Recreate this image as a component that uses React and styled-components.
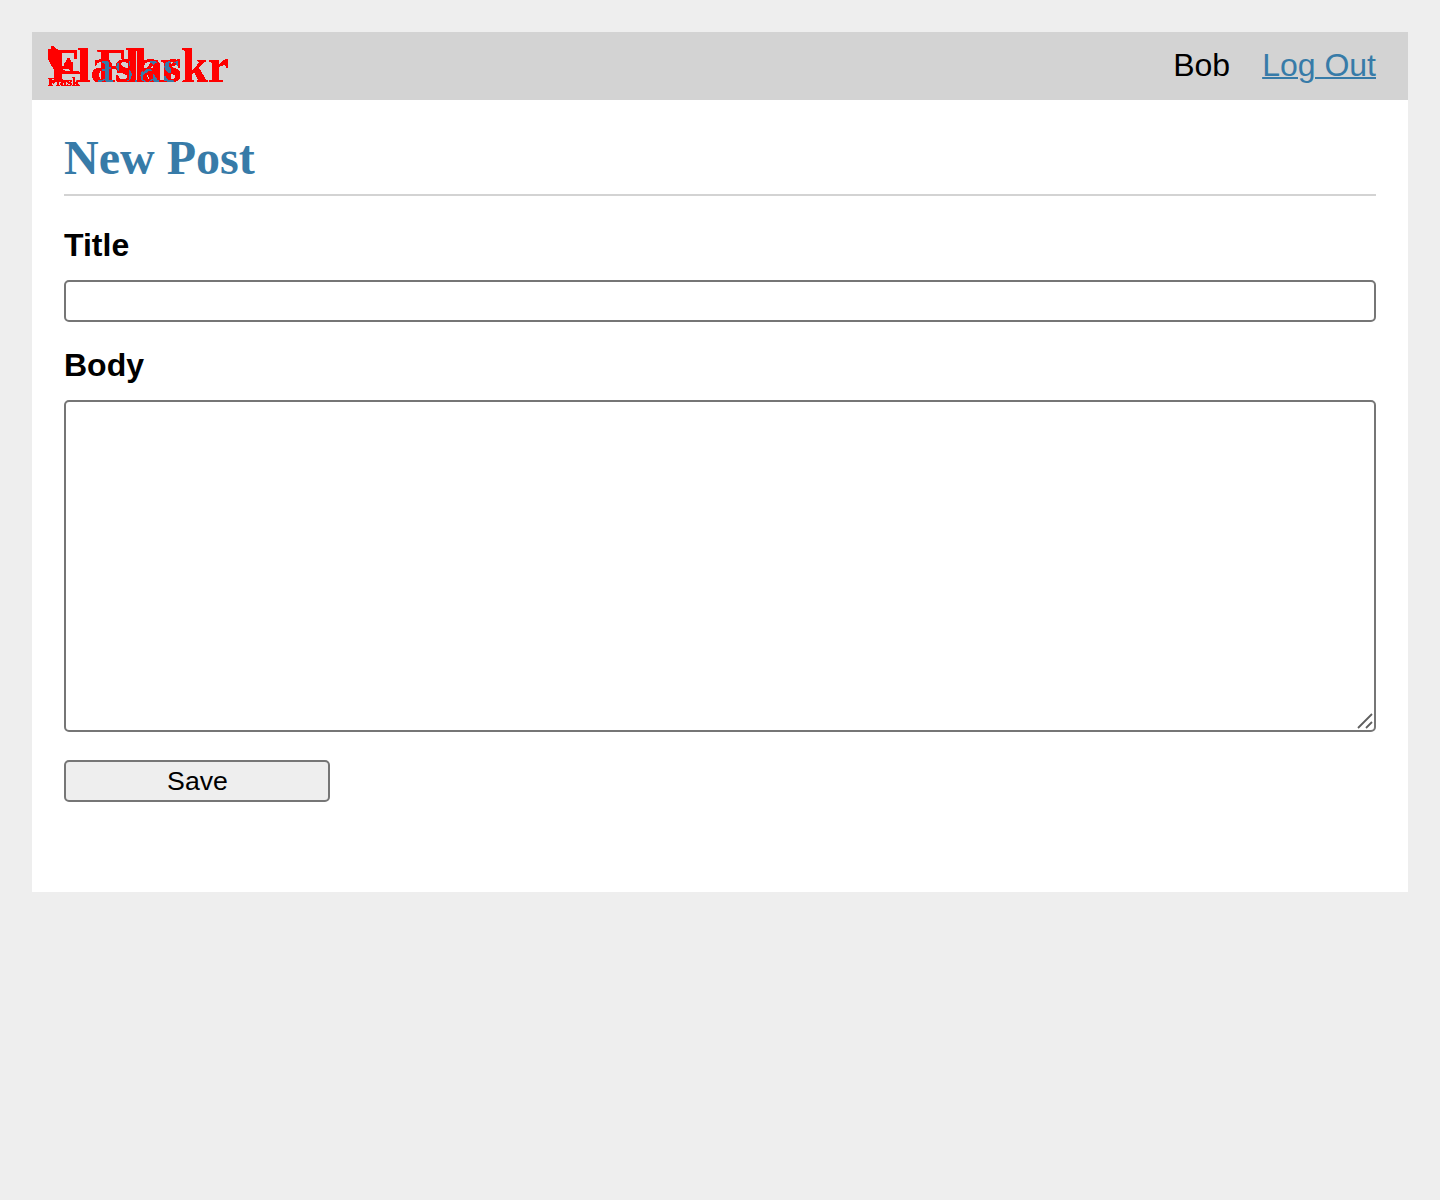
import React from "react";
import styled, { createGlobalStyle } from "styled-components";

const blue = "#377ba8";

const GlobalStyle = createGlobalStyle`
  html { background: #eee; }
  body { margin: 0; }
  * { box-sizing: border-box; }
`;

const Page = styled.div`
  margin: 32px;
  height: 860px;
  background: #fff;
  color: #000;
  font: 32px/37px "Liberation Sans", Arial, sans-serif;
`;

const NavBar = styled.nav`
  display: flex;
  justify-content: space-between;
  height: 68px;
  padding: 0 32px 0 16px;
  background: #d3d3d3;
`;

const Brand = styled.svg`
  display: block;
  width: 190px;
  height: 68px;
  font-family: "Liberation Serif", "Times New Roman", serif;
  font-weight: bold;
`;

const UserLinks = styled.div`
  display: flex;
  gap: 32px;
  padding-top: 15px;
`;

const LogOut = styled.a`
  color: ${blue};
  text-decoration: underline;
  text-decoration-thickness: 2px;
`;

const Content = styled.main`
  padding: 32px 32px 0;
`;

const Heading = styled.h1`
  margin: 0 0 31px;
  height: 64px;
  border-bottom: 2px solid #d3d3d3;
  color: ${blue};
  font: bold 48px/51px "Liberation Serif", "Times New Roman", serif;
`;

const Form = styled.form`
  display: flex;
  flex-direction: column;
`;

const Label = styled.label`
  height: 37px;
  margin-bottom: 16px;
  font-weight: bold;
`;

const TextField = styled.input`
  width: 100%;
  height: 42px;
  margin: 0 0 25px;
  border: 2px solid #767676;
  border-radius: 5px;
  background: #fff;
`;

const BodyBox = styled.div`
  display: flex;
  position: relative;
  height: 332px;
  margin-bottom: 28px;
`;

const BodyField = styled.textarea`
  width: 100%;
  height: 100%;
  border: 2px solid #767676;
  border-radius: 5px;
  background: #fff;
  resize: none;
`;

const Grip = styled.svg`
  position: absolute;
  right: 2px;
  bottom: 2px;
  pointer-events: none;
`;

const SaveButton = styled.button`
  width: 266px;
  height: 42px;
  padding: 0 0 0 1px;
  border: 2px solid #767676;
  border-radius: 5px;
  background: #eee;
  color: #000;
  font: 26.667px/38px "Liberation Sans", Arial, sans-serif;
`;

function Logo() {
  return (
    <Brand viewBox="0 0 190 68" aria-label="Flaskr">
      <defs>
        <filter id="hard" x="-5%" y="-5%" width="110%" height="110%" colorInterpolationFilters="sRGB">
          <feComponentTransfer>
            <feFuncA type="linear" slope="60" intercept="-8" />
          </feComponentTransfer>
        </filter>
        <filter id="inner" x="-5%" y="-5%" width="110%" height="110%" colorInterpolationFilters="sRGB">
          <feComponentTransfer>
            <feFuncA type="linear" slope="30" intercept="-20" />
          </feComponentTransfer>
        </filter>
        <mask id="overlap" maskUnits="userSpaceOnUse" x="0" y="0" width="190" height="68">
          <text x="0" y="50" fontSize="47" textLength="133" fill="#fff" filter="url(#inner)">Flaskr</text>
        </mask>
      </defs>
      <g fill="#f00" filter="url(#hard)">
        <g fontSize="47.5">
          <text x="2 29.3 42.7 66.7 85.4 112" y="50">Flaskr</text>
          <text x="49 77.3 90.7 114.7 133.4 160" y="50">Flaskr</text>
        </g>
        <path d="M0 18 L3 17 L3 14 L5 14 L8 17 L10 18 L10 22 L13 32 L15 36 L14 38 L9 40 L6 37 L4 34 L2 30 L0 26 Z" />
        <path d="M17 31 L20 26 L21 26 L23 30 L23 35 L18 35 L16 33 Z" />
        <path d="M12 38 L18 39 L24 39 L32 40 L32 41.5 L24 42 L14 42 Z" />
        <text x="0" y="54" fontSize="13" textLength="31.5">Flask</text>
      </g>
      <g mask="url(#overlap)">
        <text x="49 77.3 90.7 114.7 133.4 160" y="50" fontSize="47" fill={blue} filter="url(#inner)">Flaskr</text>
      </g>
    </Brand>
  );
}

export default function App() {
  return (
    <>
      <GlobalStyle />
      <Page>
        <NavBar>
          <Logo />
          <UserLinks>
            <span>Bob</span>
            <LogOut href="#">Log Out</LogOut>
          </UserLinks>
        </NavBar>
        <Content>
          <Heading>New Post</Heading>
          <Form>
            <Label htmlFor="title">Title</Label>
            <TextField id="title" />
            <Label htmlFor="body">Body</Label>
            <BodyBox>
              <BodyField id="body" />
              <Grip width="18" height="18" viewBox="0 0 18 18" stroke="#5f5f5f" strokeWidth="1.8">
                <path d="M2 16 L16 2 M10 16 L16 10" />
              </Grip>
            </BodyBox>
            <SaveButton type="button">Save</SaveButton>
          </Form>
        </Content>
      </Page>
    </>
  );
}
